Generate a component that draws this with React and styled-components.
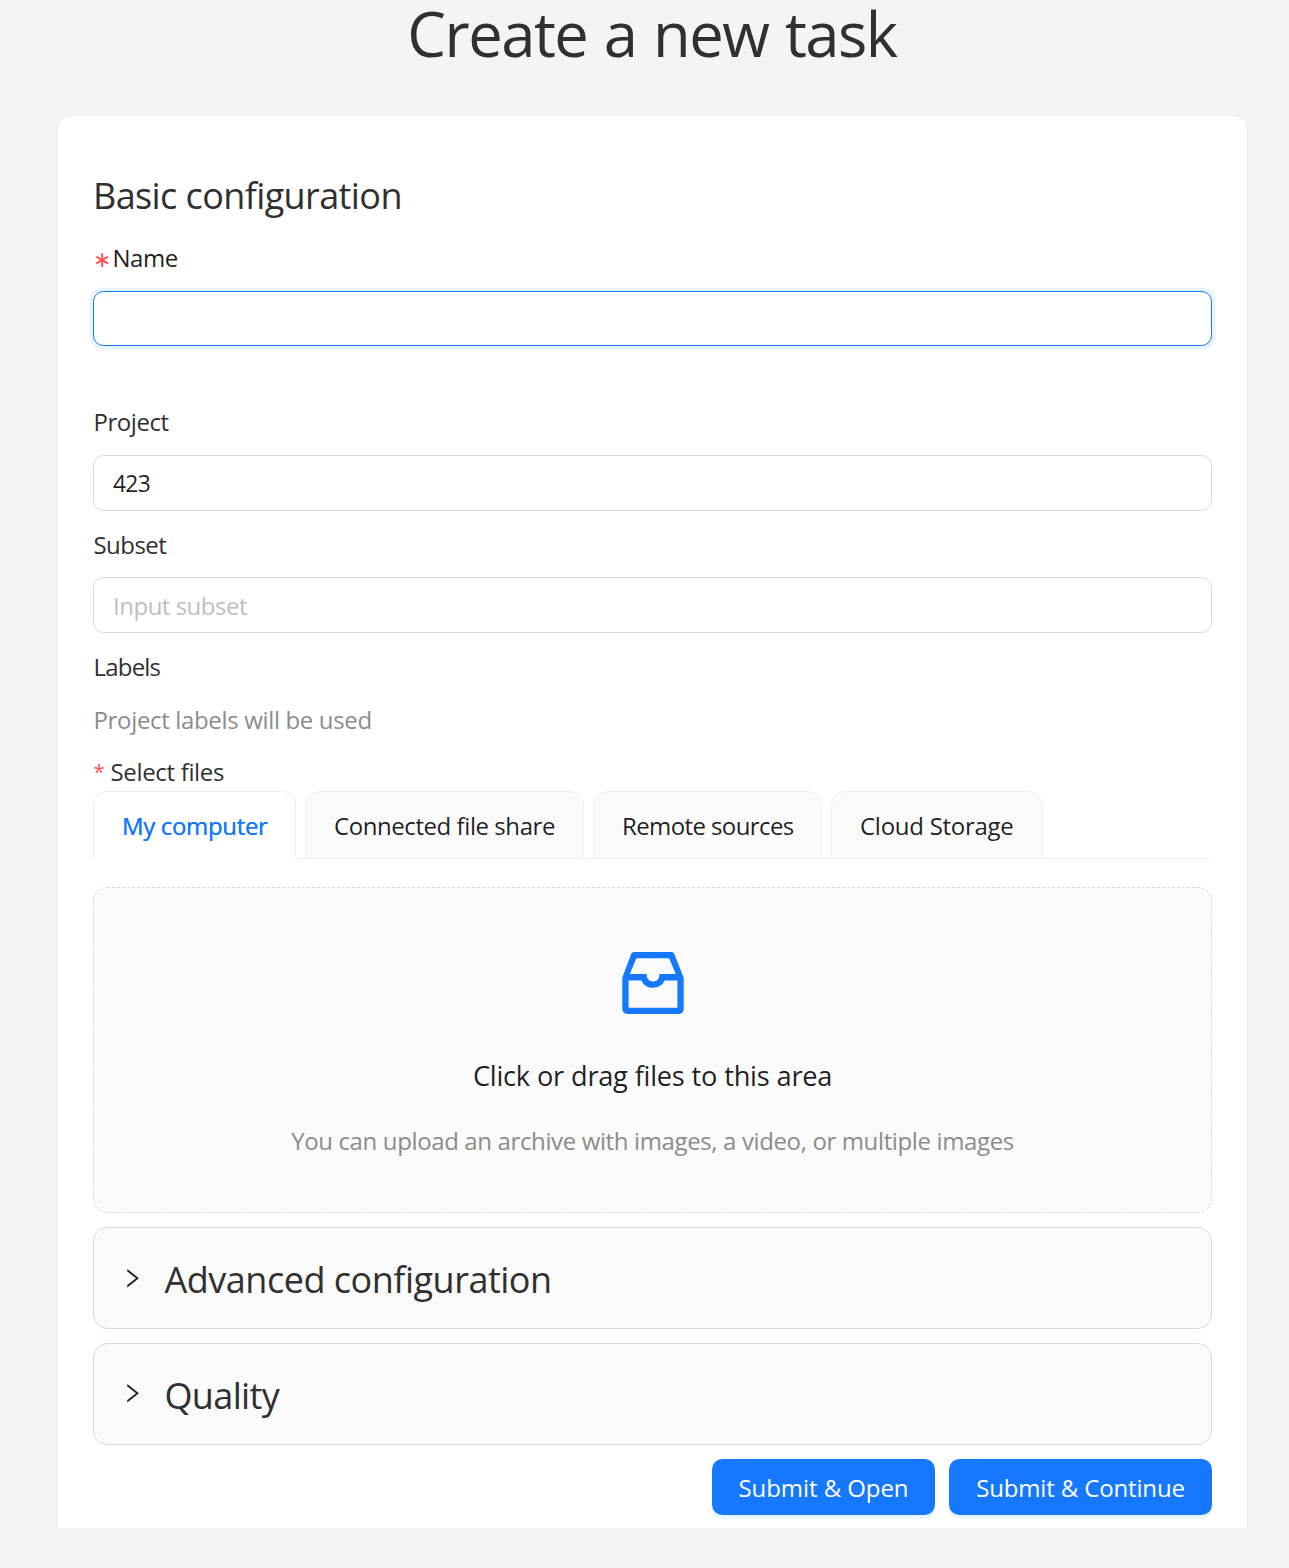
import React, { useState } from "react";
import styled, { createGlobalStyle, css } from "styled-components";

const GlobalStyle = createGlobalStyle`
  *, *::before, *::after { box-sizing: border-box; }
  body {
    margin: 0;
    background: #f4f4f4;
    font-family: "Open Sans", "Noto Sans", sans-serif;
    font-size: 24px;
    color: rgba(0, 0, 0, 0.88);
  }
`;

const tracking = css`
  letter-spacing: ${(p) => p.$track || 0}px;
`;

const Page = styled.main`
  height: 1568px;
  padding: 0 41px 0 57px;
`;

const Title = styled.h1`
  margin: 0;
  height: 115px;
  padding-top: 2px;
  padding-right: 1px;
  text-align: center;
  font-size: 61.5px;
  font-weight: 400;
  line-height: 63px;
  color: #303030;
  word-spacing: 2px;
  ${tracking}
`;

const Card = styled.section`
  display: flex;
  flex-direction: column;
  height: 1413px;
  padding: 58px 35px 0;
  background: #fff;
  border: 1px solid #ededed;
  border-bottom: 0;
  border-radius: 14px 14px 0 0;
`;

const SectionTitle = styled.h2`
  margin: 0;
  height: 44px;
  font-size: 36px;
  font-weight: 400;
  line-height: 44px;
  color: #303030;
  white-space: nowrap;
  ${tracking}
`;

const Label = styled.label`
  display: flex;
  align-items: center;
  height: 36px;
  margin-top: ${(p) => p.$gap || 0}px;
  padding-left: 0.5px;
  line-height: 36px;
  color: ${(p) => (p.$strong ? "#1f1f1f" : "#303030")};
  white-space: nowrap;
  ${tracking}
`;

const NameStar = styled.span`
  width: 20px;
  margin-left: -1px;
  padding-bottom: 1px;
  font-size: 22px;
  letter-spacing: 0;
  color: #ff4d4f;
`;

const FilesStar = styled.span`
  width: 17px;
  font-size: 20px;
  letter-spacing: 0;
  color: #ff4d4f;
`;

const Input = styled.input`
  display: block;
  flex: none;
  width: 100%;
  height: ${(p) => p.$height || 56}px;
  margin-top: ${(p) => p.$gap || 0}px;
  padding: 1px 19px 0;
  border: 1px solid ${(p) => (p.$active ? "#1677ff" : "#d9d9d9")};
  border-radius: 10.5px;
  outline: none;
  background: #fff;
  box-shadow: ${(p) => (p.$active ? "0 0 0 3.5px rgba(5, 145, 255, 0.1)" : "none")};
  font-family: inherit;
  font-size: ${(p) => p.$size || 24}px;
  color: rgba(0, 0, 0, 0.88);
  ${tracking}

  &::placeholder { color: #bfbfbf; opacity: 1; }
`;

const Hint = styled.p`
  margin: 17px 0 0;
  padding-left: 0.5px;
  height: 36px;
  line-height: 36px;
  color: #8c8c8c;
  ${tracking}
`;

const Tabs = styled.div`
  display: flex;
  flex: none;
  gap: 9px;
  height: 68px;
  margin-top: 1px;
  box-shadow: inset 0 -1px 0 #f0f0f0;
`;

const Tab = styled.button`
  display: flex;
  align-items: center;
  width: ${(p) => p.$width}px;
  padding: 0 0 0 28px;
  border: 1px solid #f0f0f0;
  border-bottom-color: ${(p) => (p.$selected ? "#fff" : "#f0f0f0")};
  border-radius: 14px 14px 0 0;
  background: ${(p) => (p.$selected ? "#fff" : "#fafafa")};
  font-family: inherit;
  font-size: 24px;
  color: ${(p) => (p.$selected ? "#1677ff" : "rgba(0, 0, 0, 0.88)")};
  text-shadow: ${(p) => (p.$selected ? "0 0 0.25px currentColor" : "none")};
  white-space: nowrap;
  ${tracking}
`;

const DropZone = styled.div`
  display: flex;
  flex: none;
  flex-direction: column;
  align-items: center;
  height: 326px;
  margin-top: 28px;
  padding-top: 53px;
  border: 1px dashed #d9d9d9;
  border-radius: 14px;
  background: #fafafa;
`;

const InboxIcon = styled.svg`
  display: block;
  flex: none;
  width: 84px;
  height: 84px;
  fill: #1677ff;
`;

const DropTitle = styled.p`
  margin: 31px 0 0;
  font-size: 27.2px;
  line-height: 40px;
  word-spacing: 0.5px;
  ${tracking}
`;

const DropHint = styled.p`
  margin: 27px 0 0;
  line-height: 36px;
  color: #8c8c8c;
  ${tracking}
`;

const Panel = styled.div`
  display: flex;
  flex: none;
  align-items: center;
  gap: 20px;
  height: 102px;
  margin-top: 14px;
  padding: 3px 26px 0;
  border: 1px solid #d9d9d9;
  border-radius: 14px;
  background: #fafafa;
`;

const Arrow = styled.svg`
  flex: none;
  width: 24.5px;
  height: 24.5px;
  margin-bottom: ${(p) => p.$lift}px;
  fill: rgba(0, 0, 0, 0.88);
`;

const Actions = styled.div`
  display: flex;
  flex: none;
  justify-content: flex-end;
  gap: 14px;
  margin-top: 14px;
`;

const Button = styled.button`
  width: ${(p) => p.$width}px;
  height: 56px;
  padding: 1px 0 0;
  border: 0;
  border-radius: 10.5px;
  background: #1677ff;
  box-shadow: 0 3.5px 0 rgba(5, 145, 255, 0.1);
  font-family: inherit;
  font-size: 24px;
  color: #fff;
  white-space: nowrap;
  ${tracking}
`;

const TABS = [
  { title: "My computer", width: 203, track: -0.34 },
  { title: "Connected file share", width: 279, track: -0.43 },
  { title: "Remote sources", width: 229, track: -0.6 },
  { title: "Cloud Storage", width: 212, track: -0.27 },
];

function CollapsePanel({ title, track, lift }) {
  return (
    <Panel>
      <Arrow viewBox="0 0 1024 1024" $lift={lift}>
        <path d="M765.7 486.8L314.9 134.7A7.97 7.97 0 00302 141v77.3c0 4.9 2.3 9.6 6.1 12.6l360 281.1-360 281.1c-3.9 3-6.1 7.7-6.1 12.6V883c0 6.7 7.7 10.4 12.9 6.3l450.8-352.1a31.96 31.96 0 000-50.4z" />
      </Arrow>
      <SectionTitle $track={track}>{title}</SectionTitle>
    </Panel>
  );
}

export default function App() {
  const [tab, setTab] = useState(0);
  return (
    <>
      <GlobalStyle />
      <Page>
        <Title $track={-1.5}>Create a new task</Title>
        <Card>
          <SectionTitle $track={-0.6}>Basic configuration</SectionTitle>
          <Label $gap={22} $strong $track={-0.5} htmlFor="name">
            <NameStar>∗</NameStar>Name
          </Label>
          <Input id="name" $active $height={55} $gap={15} />
          <Label $gap={58} $track={-0.45} htmlFor="project">Project</Label>
          <Input id="project" defaultValue="423" $size={22.8} $gap={15} $track={-0.7} />
          <Label $gap={16} $track={-0.56} htmlFor="subset">Subset</Label>
          <Input id="subset" placeholder="Input subset" $gap={14} $track={-0.49} />
          <Label $gap={16} $track={-0.8}>Labels</Label>
          <Hint $track={-0.34}>Project labels will be used</Hint>
          <Label $gap={16} $track={-0.33}>
            <FilesStar>*</FilesStar>Select files
          </Label>
          <Tabs>
            {TABS.map((t, i) => (
              <Tab key={t.title} $width={t.width} $track={t.track} $selected={i === tab} onClick={() => setTab(i)}>
                {t.title}
              </Tab>
            ))}
          </Tabs>
          <DropZone>
            <InboxIcon viewBox="0 0 1024 1024">
              <path d="M885.2 446.3l-.2-.8-112.2-285.1c-5-16.1-19.9-27.2-36.8-27.2H281.2c-17 0-32.1 11.3-36.9 27.6L139.4 443l-.3.7-.2.8c-1.3 4.9-1.7 9.9-1 14.8-.1 1.6-.2 3.2-.2 4.8V830a60.9 60.9 0 0060.8 60.8h627.2c33.5 0 60.8-27.3 60.9-60.8V464.1c0-1.3 0-2.6-.1-3.7.4-4.9 0-9.6-1.3-14.1zm-295.8-43l-.3 15.7c-.8 44.9-31.8 75.1-77.1 75.1-22.1 0-41.1-7.1-54.8-20.6S436 441.2 435.6 419l-.3-15.7H229.5L309 210h399.2l81.7 193.3H589.4zm-375 76.8h157.3c24.3 57.1 76 90.8 140.4 90.8 33.7 0 65-9.4 90.3-27.2 22.2-15.6 39.5-37.4 50.7-63.6h156.5V814H214.4V480.1z" />
            </InboxIcon>
            <DropTitle $track={-0.3}>Click or drag files to this area</DropTitle>
            <DropHint $track={-0.37}>You can upload an archive with images, a video, or multiple images</DropHint>
          </DropZone>
          <CollapsePanel title="Advanced configuration" track={-0.49} lift={3} />
          <CollapsePanel title="Quality" track={-0.65} lift={5} />
          <Actions>
            <Button $width={223} $track={-0.07}>Submit &amp; Open</Button>
            <Button $width={263} $track={-0.15}>Submit &amp; Continue</Button>
          </Actions>
        </Card>
      </Page>
    </>
  );
}
